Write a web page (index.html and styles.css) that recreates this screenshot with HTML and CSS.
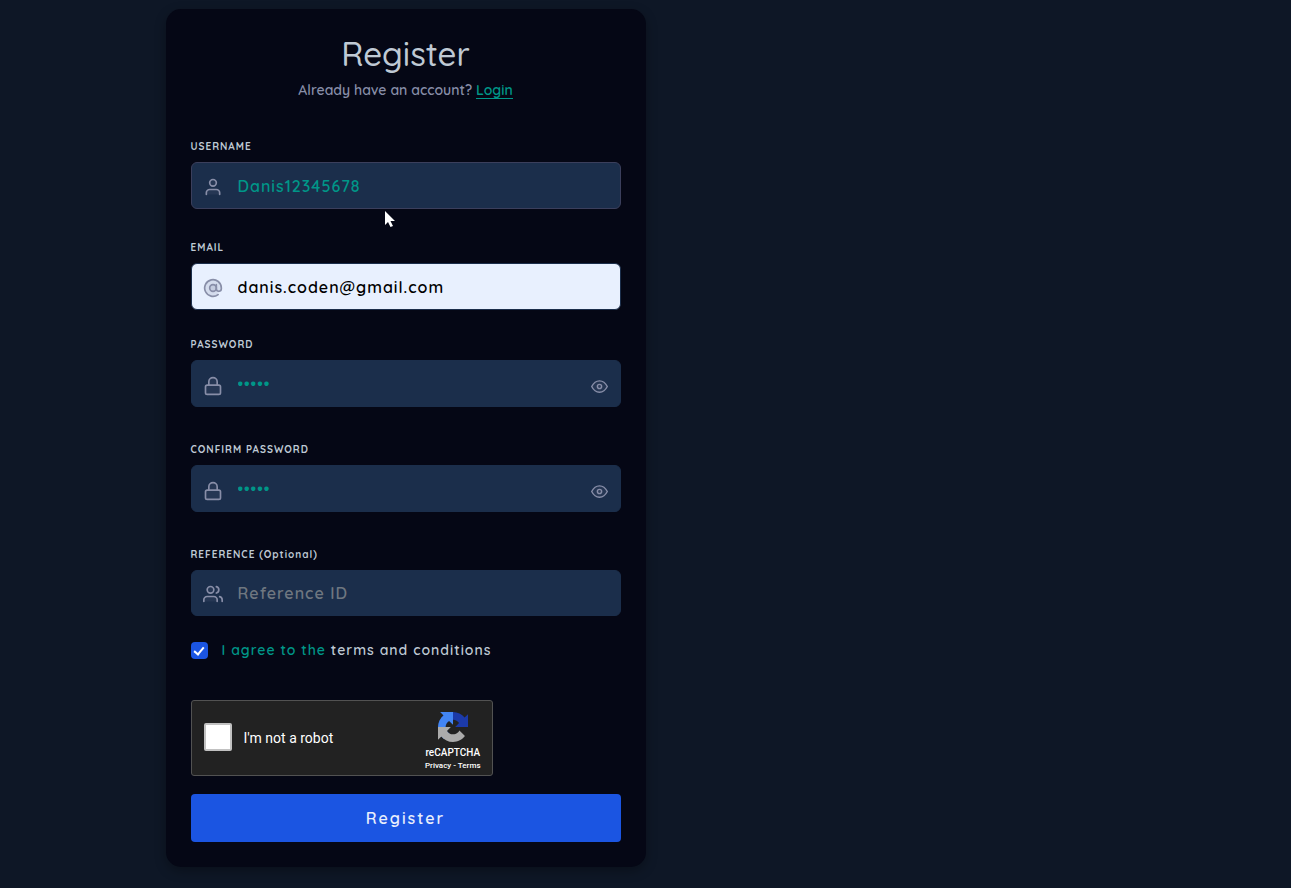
FILE: index.html
```
<!DOCTYPE html>
<html lang="en">
<head>
    <meta charset="UTF-8">
    <meta name="viewport" content="width=device-width, initial-scale=1.0">
    <title>Register</title>
    <link rel="stylesheet" href="styles.css">
</head>
<body>

<main class="page">
    <form class="card">
        <h1>Register</h1>
        <p class="signin">Already have an account? <a href="#login">Login</a></p>

        <div class="field">
            <label for="username">USERNAME</label>
            <div class="control outlined">
                <svg class="icon" viewBox="0 0 24 24"><path d="M20 21v-2a4 4 0 0 0-4-4H8a4 4 0 0 0-4 4v2"/><circle cx="12" cy="7" r="4"/></svg>
                <input type="text" id="username" value="Danis12345678">
            </div>
            <svg class="pointer" viewBox="0 0 12 18" aria-hidden="true"><path d="M1 1v14l3-3 2.500 5 2.500-1-2.500-5H11z"/></svg>
        </div>

        <div class="field email">
            <label for="email">EMAIL</label>
            <div class="control filled">
                <svg class="icon" viewBox="0 0 24 24"><circle cx="12" cy="12" r="4"/><path d="M16 8v5a3 3 0 0 0 6 0v-1a10 10 0 1 0-3.920 7.940"/></svg>
                <input type="email" id="email" value="danis.coden@gmail.com">
            </div>
        </div>

        <div class="field password">
            <label for="password">PASSWORD</label>
            <div class="control">
                <svg class="icon" viewBox="0 0 24 24"><rect x="3" y="11" width="18" height="11" rx="2"/><path d="M7 11V7a5 5 0 0 1 10 0v4"/></svg>
                <input type="password" id="password" value="12345">
                <button type="button" class="toggle" aria-label="Show password">
                    <svg viewBox="0 0 24 24"><path d="M1 12s4-8 11-8 11 8 11 8-4 8-11 8-11-8-11-8z"/><circle cx="12" cy="12" r="3"/></svg>
                </button>
            </div>
        </div>

        <div class="field password">
            <label for="confirm">CONFIRM PASSWORD</label>
            <div class="control">
                <svg class="icon" viewBox="0 0 24 24"><rect x="3" y="11" width="18" height="11" rx="2"/><path d="M7 11V7a5 5 0 0 1 10 0v4"/></svg>
                <input type="password" id="confirm" value="12345">
                <button type="button" class="toggle" aria-label="Show password">
                    <svg viewBox="0 0 24 24"><path d="M1 12s4-8 11-8 11 8 11 8-4 8-11 8-11-8-11-8z"/><circle cx="12" cy="12" r="3"/></svg>
                </button>
            </div>
        </div>

        <div class="field reference">
            <label for="reference">REFERENCE (Optional)</label>
            <div class="control">
                <svg class="icon" viewBox="0 0 24 24"><path d="M17 21v-2a4 4 0 0 0-4-4H5a4 4 0 0 0-4 4v2"/><circle cx="9" cy="7" r="4"/><path d="M23 21v-2a4 4 0 0 0-3-3.870M16 3.130a4 4 0 0 1 0 7.750"/></svg>
                <input type="text" id="reference" placeholder="Reference ID">
            </div>
        </div>

        <div class="terms">
            <input type="checkbox" id="terms" checked>
            <label for="terms">I agree to the <a href="#terms">terms and conditions</a></label>
        </div>

        <div class="captcha">
            <input type="checkbox" id="robot">
            <label for="robot">I'm not a robot</label>
            <div class="brand">
                <svg viewBox="0 0 64 64">
                    <defs>
                        <path id="arrow" d="M64 32V4.600l-7.200 7.200C50.900 4.600 42 0 32 0 21.600 0 12.300 5 6.500 12.700l11.800 11.900a15.600 15.600 0 0 1 4.700-5.400c2.100-1.600 5-2.900 9-2.900 5.500 0 10.400 3 12.900 7.300L36.600 32z"/>
                    </defs>
                    <use href="#arrow" fill="#1c3aa9"/>
                    <use href="#arrow" fill="#4285f4" transform="rotate(-90 32 32)"/>
                    <use href="#arrow" fill="#ababab" transform="rotate(180 32 32)"/>
                </svg>
                <span class="name">reCAPTCHA</span>
                <span class="links"><a href="#privacy">Privacy</a> - <a href="#captcha-terms">Terms</a></span>
            </div>
        </div>

        <button type="submit" class="submit">Register</button>
    </form>
</main>

</body>
</html>
```
FILE: styles.css
```
* {
    box-sizing: border-box;
}
body {
    margin: 0;
    background: #0e1726;
    color: #888ea8;
    font-family: 'Quicksand', 'Lato', sans-serif;
    font-size: 14px;
    font-weight: 600;
    letter-spacing: 1px;
}
.page {
    display: grid;
    grid-template-columns: repeat(auto-fill, minmax(320px, 480px));
    max-width: 960px;
    margin: 0 auto;
    padding: 9px 0 20px;
}
.card {
    padding: 25px;
    border-radius: 15px;
    background: #050715;
    box-shadow: 0 4px 12px rgba(0, 0, 0, 0.3);
}
h1 {
    margin: 0;
    color: #bfc9d4;
    font-size: 33px;
    font-weight: 500;
    line-height: 40px;
    letter-spacing: normal;
    text-align: center;
}
.signin {
    margin: 6px 0 39px;
    line-height: 20px;
    letter-spacing: normal;
    text-align: center;
}
.signin a {
    display: inline-block;
    color: #009688;
    line-height: 16px;
    text-decoration: none;
    border-bottom: 1px solid #009688;
}
.field {
    position: relative;
    margin-bottom: 31px;
}
.field.email {
    margin-bottom: 27px;
}
.field.password {
    margin-bottom: 35px;
}
.field.reference {
    margin-bottom: 24px;
}
.field label {
    display: block;
    margin-bottom: 7px;
    color: #bfc9d4;
    font-size: 10px;
    font-weight: 700;
    line-height: 16px;
}
.control {
    display: flex;
    align-items: center;
    height: 47px;
    padding: 0 12px 0 11px;
    border: 1px solid #1b2e4b;
    border-radius: 6px;
    background: #1b2e4b;
}
.reference .control {
    height: 46px;
}
.control.outlined {
    border-color: #3b3f5c;
}
.control.filled {
    background: #e8f0fe;
}
.icon {
    flex: none;
    width: 20px;
    height: 20px;
    margin-top: 2px;
    fill: rgba(136, 142, 168, 0.1);
    stroke: #888ea8;
    stroke-width: 2;
    stroke-linecap: round;
    stroke-linejoin: round;
}
.password .icon {
    margin-top: 4px;
}
.filled .icon {
    fill: rgba(136, 142, 168, 0.2);
}
.control input {
    flex: 1;
    min-width: 0;
    padding: 0 0 0 15px;
    border: none;
    outline: none;
    background: none;
    color: #009688;
    font: inherit;
    font-size: 16px;
    line-height: 24px;
    letter-spacing: 1px;
}
.control input::placeholder {
    color: #6f7780;
}
.filled input {
    color: #000;
}
.toggle {
    display: flex;
    padding: 6px 0 0;
    border: none;
    background: none;
    cursor: pointer;
}
.toggle svg {
    width: 17px;
    height: 17px;
    fill: rgba(136, 142, 168, 0.1);
    stroke: #888ea8;
    stroke-width: 2;
}
.pointer {
    position: absolute;
    top: 71px;
    left: 193px;
    width: 12px;
    height: 18px;
    fill: #fff;
}
.terms {
    display: flex;
    align-items: center;
    gap: 14px;
    margin-bottom: 40px;
    line-height: 20px;
}
.terms input {
    appearance: none;
    display: grid;
    place-items: center;
    width: 17px;
    height: 17px;
    margin: 0;
    border-radius: 4px;
    background: #1b2e4b;
}
.terms input:checked {
    background: #1b55e2;
}
.terms input:checked::before {
    content: '';
    width: 8px;
    height: 4px;
    border: solid #fff;
    border-width: 0 0 2px 2px;
    transform: rotate(-50deg);
}
.terms label {
    color: #009688;
}
.terms a {
    color: #bfc9d4;
    text-decoration: none;
}
.captcha {
    display: flex;
    align-items: center;
    width: 302px;
    max-width: 100%;
    height: 76px;
    margin-bottom: 18px;
    padding: 0 11px 0 12px;
    border: 1px solid #525252;
    border-radius: 3px;
    background: #222;
    color: #fff;
    font-family: Roboto, sans-serif;
    font-weight: 400;
    letter-spacing: normal;
}
.captcha input {
    appearance: none;
    width: 28px;
    height: 28px;
    margin: 0 12px 2px 0;
    border: 2px solid #c1c1c1;
    border-radius: 2px;
    background: #fff;
}
.brand {
    display: flex;
    flex-direction: column;
    align-items: center;
    margin-left: auto;
    padding-top: 6px;
    font-weight: 500;
}
.brand svg {
    width: 30px;
    height: 30px;
    margin-bottom: 4px;
}
.brand .name {
    font-size: 10px;
    line-height: 14px;
}
.brand .links {
    font-size: 8px;
    line-height: 11px;
}
.brand a {
    color: inherit;
    text-decoration: none;
}
.submit {
    display: block;
    width: 100%;
    height: 48px;
    border: none;
    border-radius: 4px;
    background: #1b55e2;
    color: #e8eefc;
    font: inherit;
    font-size: 16px;
    letter-spacing: 2px;
    cursor: pointer;
}
```
